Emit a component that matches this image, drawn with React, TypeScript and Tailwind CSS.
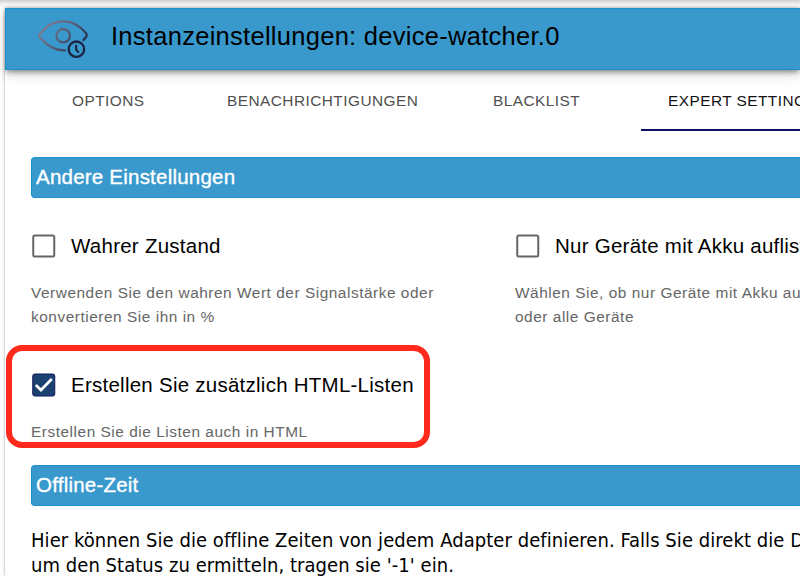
import React from 'react';

function DeviceWatcherLogo() {
  return (
    <svg className="h-10 w-[52px] shrink-0" viewBox="0 0 52 40" fill="none" strokeLinecap="round">
      <defs>
        <linearGradient id="eye" x1="6" y1="2" x2="44" y2="36" gradientUnits="userSpaceOnUse">
          <stop offset="0" stopColor="#857f94" />
          <stop offset="0.5" stopColor="#565f7a" />
          <stop offset="1" stopColor="#151f3f" />
        </linearGradient>
      </defs>
      <g stroke="url(#eye)" strokeWidth="2.300">
        <path d="M28 31.300C17 32 8.500 25 2.800 18.200Q1.600 16.600 2.800 15C8.500 7.500 17 2.300 26.500 2.300C36 2.300 43.500 7 49.200 14.400Q50.400 16 49.200 17.700L46.500 21" />
        <circle cx="26.200" cy="16.700" r="6.700" />
      </g>
      <circle cx="39.400" cy="30.200" r="7.700" stroke="#1c2444" strokeWidth="2.300" />
      <path d="M39.100 26.600V30.600L41.300 33" stroke="#1c2444" strokeWidth="2.100" />
    </svg>
  );
}

function SectionTitle({ children }: { children: React.ReactNode }) {
  return (
    <h2 className="h-[41px] rounded-l-[4px] border-y border-l border-[#1b90cb] bg-[#3999cc] pl-1 text-[20.5px] leading-[37px] tracking-[0.22px] text-white [-webkit-text-stroke:0.35px_white]">
      {children}
    </h2>
  );
}

type OptionProps = { label: string; checked?: boolean; lines: string[] };

function Option({ label, checked = false, lines }: OptionProps) {
  return (
    <div className="whitespace-nowrap">
      <div className="flex h-8 items-center">
        <svg className="ml-px h-6 w-6" viewBox="0 0 24 24" fill="none">
          {checked ? (
            <>
              <rect x="0.750" y="1" width="22" height="22" rx="2" fill="#1b4172" stroke="#101858" />
              <path d="M3.800 12L9 17L19.800 6" stroke="#fff" strokeWidth="2.700" />
            </>
          ) : (
            <rect x="1.250" y="1.500" width="21" height="21" rx="1.500" stroke="#666" strokeWidth="2" />
          )}
        </svg>
        <span className="ml-[15px] text-[20.5px] tracking-[0.25px] text-black">{label}</span>
      </div>
      <p className="mt-[18.5px] text-[15.4px] leading-[24.5px] tracking-[0.54px] text-[#666]">
        {lines.map((line) => (
          <span className="block" key={line}>{line}</span>
        ))}
      </p>
    </div>
  );
}

export default function App() {
  return (
    <div className="relative flex h-[576px] w-[800px] flex-col overflow-hidden bg-white font-['Liberation_Sans',Arial,sans-serif]">
      <div className="h-2 shrink-0 bg-linear-to-b from-[#cfcfcf] via-[#f3f3f3] to-[#fafafa]" />
      <div className="ml-[5px] flex min-h-0 flex-1 flex-col bg-white shadow-[0_0_3px_rgba(0,0,0,0.35)]">
        <header className="flex h-[62px] shrink-0 items-center border-y border-l border-[#1b90cb] bg-[#3999cc] pl-[31px] shadow-[0_3px_5px_-1px_rgba(0,0,0,0.4),0_5px_12px_rgba(0,0,0,0.14)]">
          <DeviceWatcherLogo />
          <h1 className="ml-[22px] whitespace-nowrap pb-1.5 text-[25.5px] leading-8 tracking-[0.28px] text-black">
            Instanzeinstellungen: device-watcher.0
          </h1>
        </header>
        <nav className="flex h-[61px] shrink-0 whitespace-nowrap pl-px text-[15.4px] leading-[61px] tracking-[0.46px] text-[#505050]">
          <span className="w-[155px] shrink-0 pl-[66px]">OPTIONS</span>
          <span className="w-[266px] shrink-0 pl-[66px]">BENACHRICHTIGUNGEN</span>
          <span className="w-[214px] shrink-0 pl-[66px]">BLACKLIST</span>
          <span className="w-[212px] shrink-0 border-b-2 border-[#0b1464] pl-[27px] text-[#111]">EXPERT SETTINGS</span>
        </nav>
        <main className="pl-[26px] pt-[26px]">
          <SectionTitle>Andere Einstellungen</SectionTitle>
          <div className="mt-8 grid grid-cols-[484px_1fr] gap-y-[39.5px]">
            <Option label="Wahrer Zustand" lines={['Verwenden Sie den wahren Wert der Signalstärke oder', 'konvertieren Sie ihn in %']} />
            <Option label="Nur Geräte mit Akku auflisten" lines={['Wählen Sie, ob nur Geräte mit Akku aufgelistet werden', 'oder alle Geräte']} />
            <Option checked label="Erstellen Sie zusätzlich HTML-Listen" lines={['Erstellen Sie die Listen auch in HTML']} />
          </div>
          <div className="mt-[20.5px]">
            <SectionTitle>Offline-Zeit</SectionTitle>
          </div>
          <p className="mt-[22px] whitespace-nowrap font-['DejaVu_Sans_Condensed','DejaVu_Sans',sans-serif] text-[20px] leading-[25px] tracking-[0.05px] text-black">
            Hier können Sie die offline Zeiten von jedem Adapter definieren. Falls Sie direkt die Daten
            <br />
            um den Status zu ermitteln, tragen sie '-1' ein.
          </p>
        </main>
      </div>
      <div className="absolute left-[6px] top-[345px] h-[103px] w-[424px] rounded-[16px] border-6 border-[#ff2a1c]" />
    </div>
  );
}
